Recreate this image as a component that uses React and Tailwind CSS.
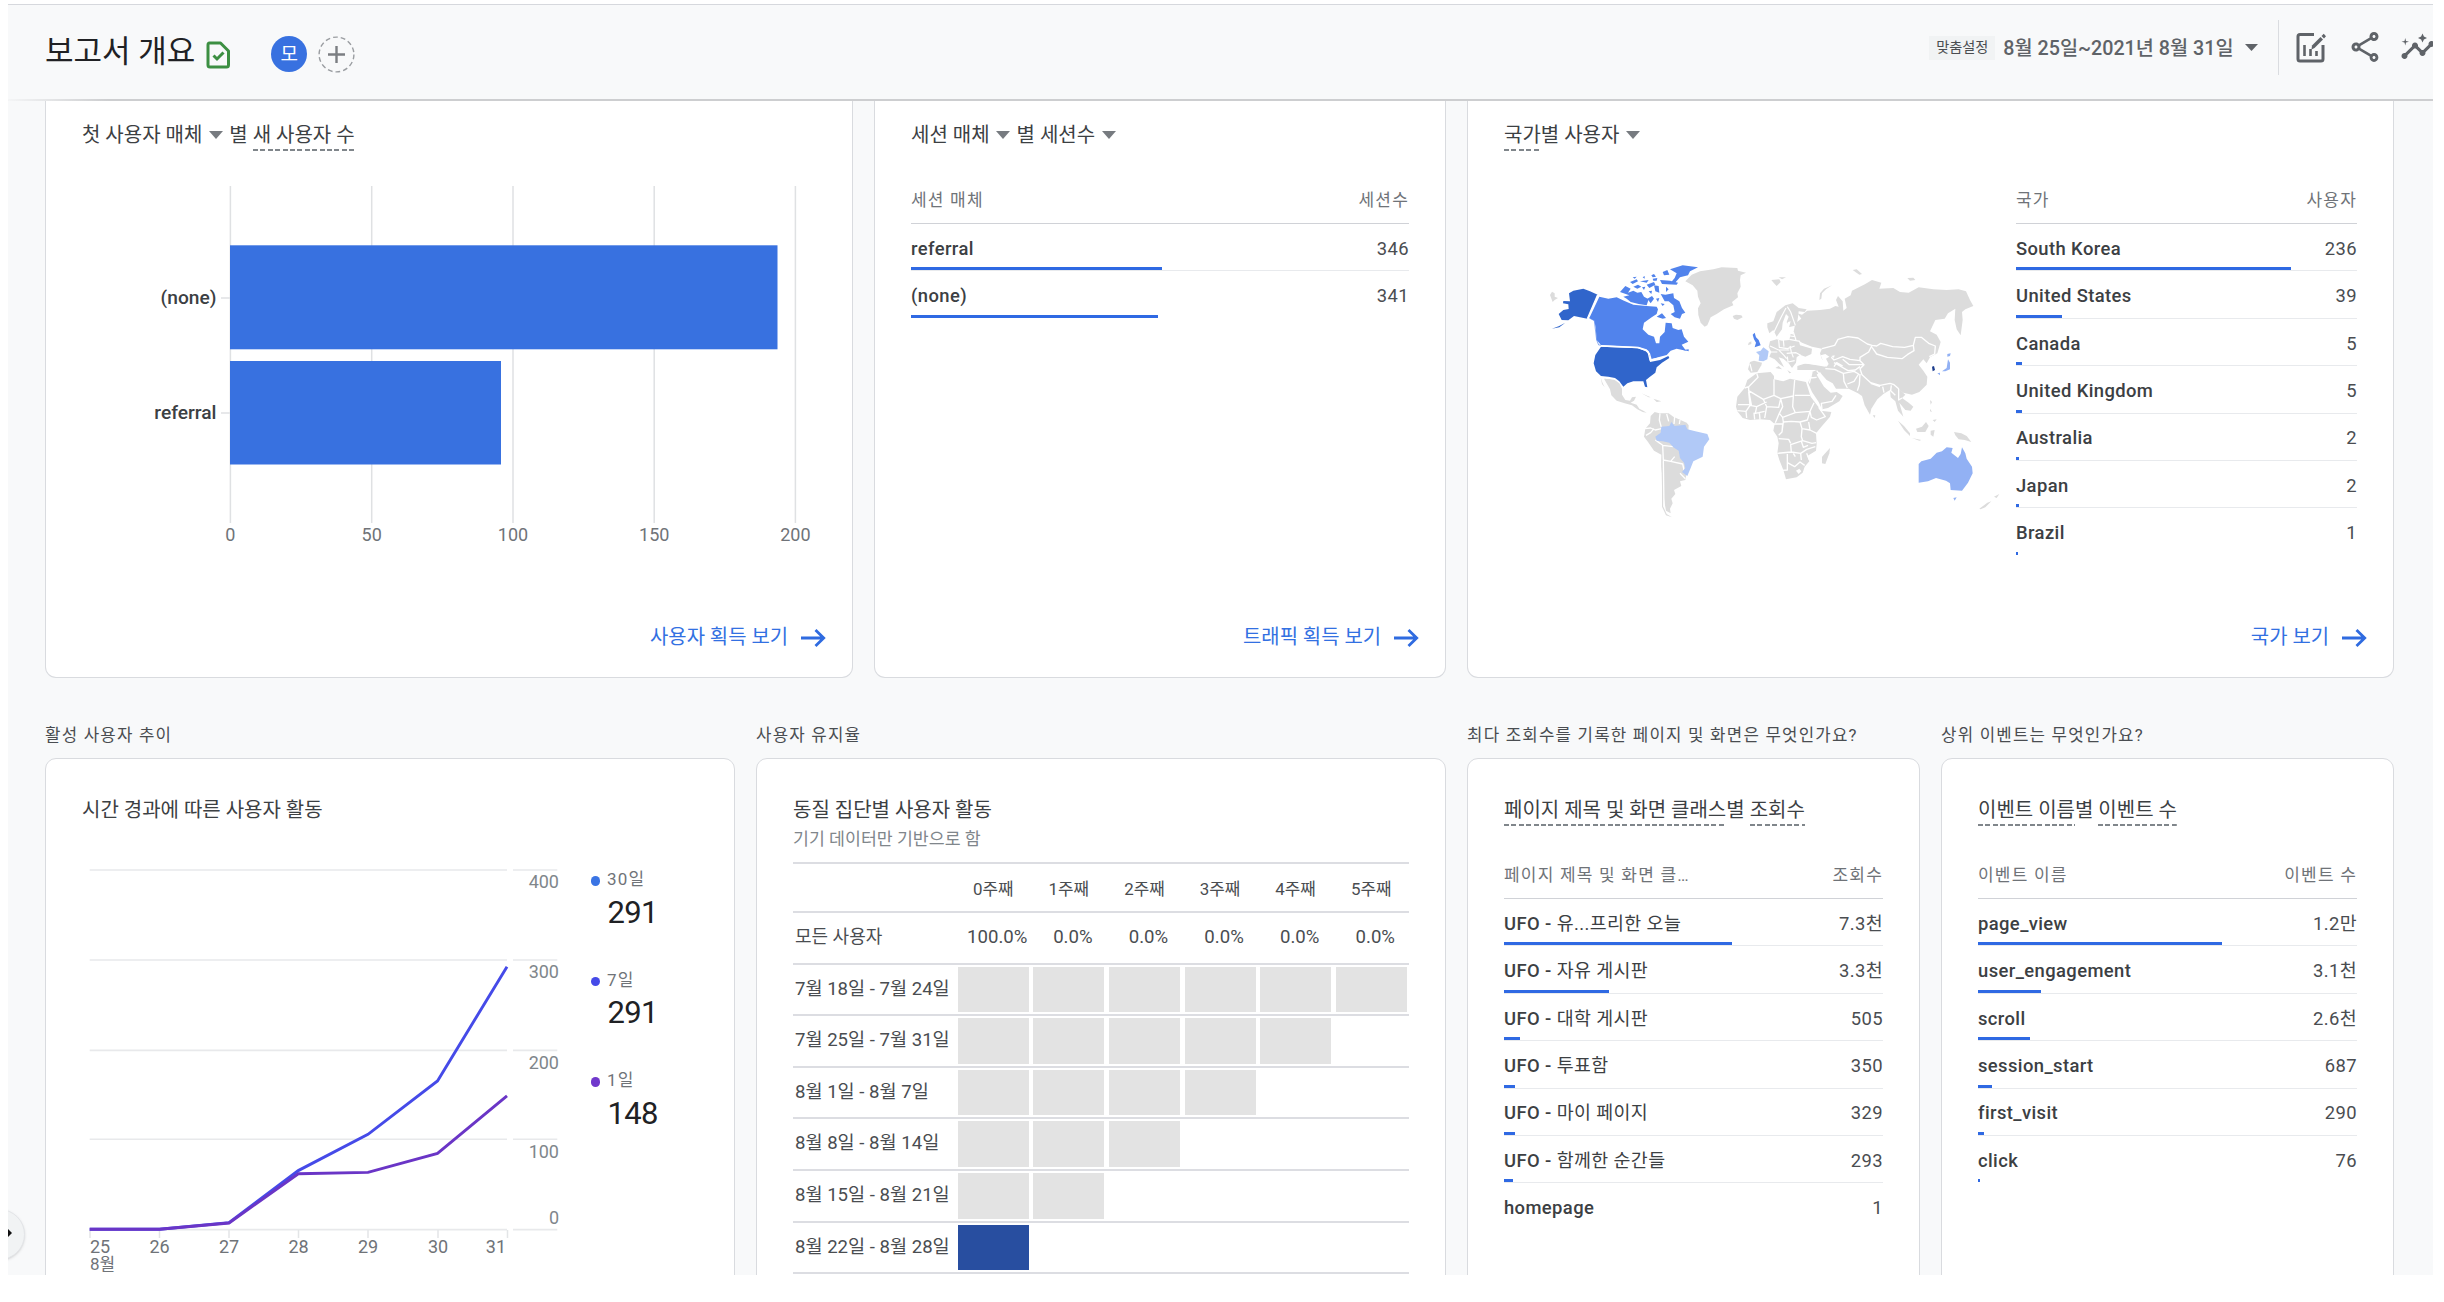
import React from "react";
import { MdInsights, MdOutlineShare } from "react-icons/md";

const Caret = ({ className = "" }) => (
  <svg className={"shrink-0 " + className} width="14" height="8" viewBox="0 0 14 8">
    <path d="M0 0H14L7 8Z" fill="#777b80" />
  </svg>
);

const Dotted = ({ children, className = "" }) => (
  <span
    className={
      "inline-flex h-[31px] items-center whitespace-pre bg-[repeating-linear-gradient(90deg,#80868b_0_5px,transparent_5px_7.4px)] bg-[length:100%_2px] bg-bottom bg-no-repeat " +
      className
    }
  >
    {children}
  </span>
);

const CardTitle = ({ children }) => (
  <div className="flex h-[30px] shrink-0 items-center whitespace-pre pt-[2px] text-[20px] leading-[30px] text-[#3c4043]">
    {children}
  </div>
);

const CardLink = ({ children }) => (
  <div className="mt-auto mr-[-10px] flex h-[30px] items-center justify-end gap-[13px] text-[19.9px] text-[#3270e2]">
    <span className="whitespace-pre">{children}</span>
    <svg width="25" height="18" viewBox="0 0 25 18" fill="none" stroke="#2f6be0" strokeWidth="2.8">
      <path d="M0 9H22.5M14.5 1L22.7 9L14.5 17" />
    </svg>
  </div>
);

const PREFIX = "UFO - ";

const RowName = ({ name }) =>
  name.startsWith(PREFIX) ? (
    <span className="whitespace-pre">
      <span className="font-medium">{PREFIX}</span>
      {name.slice(PREFIX.length)}
    </span>
  ) : (
    <span className="font-medium">{name}</span>
  );

const DataTable = ({ head, rows, className = "" }) => (
  <div className={"mt-[29px] " + className}>
    <div className="flex h-[46px] items-center justify-between border-b-[1.5px] border-[#d0d2d7] pt-px text-[17px] tracking-[1.2px] text-[#6f7378]">
      <span>{head[0]}</span>
      <span>{head[1]}</span>
    </div>
    {rows.map(([name, value, bar], i) => (
      <div
        key={name}
        className={
          "relative flex h-[47.4px] items-center justify-between border-b pt-[3px] text-[18.4px] tracking-[0.4px] text-[#3c4043] " +
          (i === rows.length - 1 ? "border-transparent" : "border-[#e8eaed]")
        }
      >
        <RowName name={name} />
        <span className="text-[#4a4d51]">{value}</span>
        <span className="absolute bottom-0 left-0 h-[3px] bg-[#2f69e3]" style={{ width: bar }} />
      </div>
    ))}
  </div>
);

const Card = ({ top, className = "", children }) => (
  <section
    className={
      "flex shrink-0 flex-col border-[1.5px] border-[#d9dbdf] bg-white px-[36px] " +
      (top ? "h-[579px] rounded-b-[11px] border-t-0 pt-5 pb-[24px] " : "h-[560px] rounded-[11px] pt-[35px] ") +
      className
    }
  >
    {children}
  </section>
);

const Section = ({ label, className, children }) => (
  <div className={"shrink-0 " + className}>
    <div className="mb-2 h-[30px] whitespace-nowrap text-[16.8px] leading-[30px] tracking-[1.2px] text-[#4a4d51]">{label}</div>
    <Card>{children}</Card>
  </div>
);

const BAR_TICKS = [
  [230.4, "0"],
  [371.7, "50"],
  [513, "100"],
  [654.2, "150"],
  [795.4, "200"],
];

const BarChart = () => (
  <svg className="mt-[21px] shrink-0" width="740" height="390" viewBox="82 170 740 390">
    {BAR_TICKS.map(([x, t]) => (
      <g key={t}>
        <path d={`M${x} 186V523`} stroke="#dfe1e3" strokeWidth="1.5" />
        <text x={x} y="541" textAnchor="middle" fontSize="18" fill="#6f7378">{t}</text>
      </g>
    ))}
    <rect x="230" y="245.3" width="547.5" height="104" fill="#3871e0" />
    <rect x="230" y="361" width="271" height="103.5" fill="#3871e0" />
    <path d="M221 298H230M221 413H230" stroke="#dfe1e3" strokeWidth="1.5" />
    <g fontSize="19.2" fontWeight="500" fill="#3c4043" textAnchor="end">
      <text x="216.500" y="303.5">(none)</text>
      <text x="216.500" y="419">referral</text>
    </g>
  </svg>
);

const DAYS = [
  [90, "25", "start"],
  [159.5, "26", "middle"],
  [229, "27", "middle"],
  [298.5, "28", "middle"],
  [368, "29", "middle"],
  [438, "30", "middle"],
  [506, "31", "end"],
];
const LEVELS = [
  [870, "400", 888],
  [960, "300", 978.3],
  [1050.4, "200", 1068.8],
  [1139.2, "100", 1157.8],
  [1229.6, "0", 1224],
];

const LineChart = () => (
  <svg className="mt-[-1px] shrink-0" width="490" height="430" viewBox="82 850 490 430">
    {LEVELS.map(([y, t, ty]) => (
      <g key={t}>
        <path d={`M89.7 ${y}H507M513 ${y}H557.3`} stroke="#e8e9eb" strokeWidth="1.6" />
        <text x="559" y={ty} textAnchor="end" fontSize="18" fill="#80868b">{t}</text>
      </g>
    ))}
    <path d="M90 1230v8M159.5 1230v8M229 1230v8M298.5 1230v8M368 1230v8M438 1230v8M507.5 1230v8" stroke="#e3e5e7" strokeWidth="1.5" />
    <path d="M89.7 1229.2H159.5L229 1222.6L298.3 1170.6L368 1134.3L437.5 1081L507 966.7" fill="none" stroke="#454ae8" strokeWidth="2.9" />
    <path d="M89.7 1229.2H159.5L229 1223L298.3 1173.8L368 1172.4L437.5 1153.4L507 1095.8" fill="none" stroke="#6a35c6" strokeWidth="2.9" />
    <g fontSize="18" fill="#6f7378">
      {DAYS.map(([x, t, anchor]) => (
        <text key={t} x={x} y="1253" textAnchor={anchor}>{t}</text>
      ))}
      <text x="90" y="1270" fontSize="17">8월</text>
    </g>
  </svg>
);

const LEGEND = [
  ["30일", "291", "bg-[#3a74e4]"],
  ["7일", "291", "bg-[#454ae8]"],
  ["1일", "148", "bg-[#7038cc]"],
];

const Legend = () => (
  <div className="ml-[18.500px] pt-[14px]">
    {LEGEND.map(([label, value, dot]) => (
      <div key={label} className="h-[100.6px]">
        <div className="flex h-[30px] items-center gap-[7px] text-[17px] tracking-[1.2px] text-[#6f7378]">
          <span className={"mt-[2px] h-[9.5px] w-[9.5px] rounded-full " + dot} />
          {label}
        </div>
        <div className="ml-[17px] flex h-[36px] items-center text-[31px] tracking-[-0.7px] text-[#202124]">{value}</div>
      </div>
    ))}
  </div>
);

const COHORTS = [
  ["7월 18일 - 7월 24일", 6],
  ["7월 25일 - 7월 31일", 5],
  ["8월 1일 - 8월 7일", 4],
  ["8월 8일 - 8월 14일", 3],
  ["8월 15일 - 8월 21일", 2],
  ["8월 22일 - 8월 28일", 1],
];

const CohortTable = () => (
  <div className="mt-[8px] w-[616px] text-[#4a4d51]">
    <div className="flex h-[48.7px] items-center border-t-2 border-[#dcdde2] pt-[4px] pl-[162.5px] text-[16.9px]">
      {[0, 1, 2, 3, 4, 5].map((n) => (
        <span key={n} className="w-[75.6px] text-center">{n}주째</span>
      ))}
    </div>
    <div className="flex h-[52px] items-center border-t-2 border-[#dcdde2] text-[18.6px]">
      <span className="w-[162.5px] pb-[2px] pl-[2px] text-[18px]">모든 사용자</span>
      {["100.0%", "0.0%", "0.0%", "0.0%", "0.0%", "0.0%"].map((v, i) => (
        <span key={i} className="w-[75.6px] pl-[8px] text-center">{v}</span>
      ))}
    </div>
    {COHORTS.map(([range, n], r) => (
      <div key={range} className="flex h-[51.6px] border-t-2 border-[#dcdde2]">
        <span className="flex w-[162.5px] items-center whitespace-nowrap pl-[2px] text-[18.6px]">{range}</span>
        {Array.from({ length: n }, (_, i) => (
          <span key={i} className="w-[75.6px] px-[2.3px] pt-[2px] pb-[2px]">
            <span className={"block h-full " + (r === 5 ? "bg-[#284ea0]" : "bg-[#e3e3e3]")} />
          </span>
        ))}
      </div>
    ))}
    <div className="border-t-2 border-[#dcdde2]" />
  </div>
);

const WorldMap = () => (
  <svg className="mt-[91px] shrink-0" width="512" height="300" viewBox="12 0 1536 900" strokeLinejoin="round">
    <g fill="#dcdcdc">
      {/* Greenland, Iceland, Svalbard */}
      <path d="M556,124L575,104L600,94L640,88L665,82L712,84L714,92L738,98L722,106L720,120L722,140L712,160L714,172L696,186L700,196L672,208L650,222L632,232L622,256L614,260L602,248L595,225L594,205L602,190L594,170L592,152L578,136Z" />
      <path d="M698,228L708,224L724,226L728,232L712,240L702,236Z" />
      <path d="M814,120L838,118L842,126L830,138L822,130ZM836,112L858,112L846,118Z" />
      <path d="M1058,90L1070,88L1086,102L1078,104ZM1222,114L1240,113L1246,120L1230,122Z" />
      <path d="M958,180L960,160L972,146L996,136L978,148L966,160L964,176Z" />
      <path d="M150,165L156,155L164,160L164,170L174,174L164,180L158,186Z" />
      {/* Mexico and Central America */}
      <path d="M312,416L326,416L344,420L358,430L366,446L366,464L376,480L390,482L396,472L408,470L402,482L392,488L410,494L418,506L430,512L440,518L428,516L412,508L396,496L374,490L350,482L334,466L330,448Z" />
      <path d="M302,412L308,430L314,442L306,432Z" />
      <path d="M424,460L452,472L446,472ZM460,476L484,484L470,486Z" />
      {/* South America */}
      <path d="M452,528L464,516L478,520L506,520L520,530L560,548L566,556L560,700L556,720L540,724L544,738L522,750L526,762L514,776L518,790L510,806L512,820L498,812L494,790L490,760L488,720L484,680L484,644L462,632L444,606L432,590L436,566L450,550Z" />
      <path d="M484,650L490,690L492,750L490,800L500,822L516,832L498,826L486,800L486,740Z" />
      {/* Africa */}
      <path d="M770,400L812,396L822,408L822,418L850,424L870,416L918,426L932,470L956,502L962,512L994,516L990,530L966,558L948,580L950,612L948,632L922,648L928,664L914,680L908,698L890,712L858,718L850,690L838,660L832,640L836,610L832,590L820,572L824,552L810,540L780,538L750,540L728,534L712,514L708,500L712,470L734,444L742,420Z" />
      <path d="M990,624L988,640L976,672L966,670L966,650Z" />
      {/* Europe */}
      <path d="M750,366L762,362L786,368L784,376L772,396L752,398L744,388Z" />
      <path d="M802,262L802,250L820,244L830,216L856,196L878,190L896,204L920,208L914,216L896,214L894,232L890,256L866,262L860,246L866,230L858,222L848,248L846,268L830,290L820,270L808,280Z" />
      <path d="M810,304L830,298L846,302L868,300L872,282L884,284L896,300L900,316L936,326L934,342L916,350L900,344L890,352L888,368L876,384L866,370L850,356L836,352L846,370L852,382L838,372L824,358L808,350L814,336L806,320Z" />
      <path d="M746,308L754,304L754,312L744,316ZM862,390L874,398L868,400ZM846,388L826,384L836,378Z" />
      {/* Russia and Asia */}
      <path d="M880,280L886,250L904,236L892,220L906,224L922,212L960,210L990,206L1006,198L1016,200L1008,180L1014,168L1028,184L1030,212L1040,204L1034,176L1052,166L1056,152L1096,132L1116,120L1144,128L1138,146L1180,144L1200,156L1226,158L1256,142L1300,148L1340,150L1376,148L1398,154L1410,180L1420,198L1396,208L1386,216L1388,240L1382,286L1370,268L1364,240L1366,206L1344,220L1334,236L1306,240L1290,274L1310,284L1322,306L1312,340L1290,352L1280,370L1270,358L1256,374L1270,392L1282,410L1280,434L1258,456L1236,464L1210,458L1196,446L1216,464L1206,474L1226,488L1240,500L1232,512L1216,510L1198,488L1210,530L1194,512L1186,484L1172,472L1170,450L1150,462L1132,478L1114,506L1110,524L1094,496L1086,468L1074,460L1046,446L1008,446L998,430L980,420L966,404L960,396L950,404L972,440L992,458L1010,456L1028,468L1018,484L984,504L966,508L956,486L936,456L924,428L932,412L936,396L950,390L892,390L892,378L918,370L950,376L976,380L984,372L966,358L960,340L966,326L936,320L906,308L888,296Z" />
      <path d="M1194,542L1212,558L1230,580L1230,588L1212,570ZM1248,566L1266,560L1278,546L1286,558L1276,576L1252,576ZM1292,572L1304,570L1300,590L1292,584Z" />
      <path d="M1236,594L1264,600L1258,602ZM1362,576L1384,580L1400,588L1414,606L1394,600L1376,598L1366,586ZM1290,506L1296,516L1290,514ZM1298,540L1310,538L1304,546ZM1290,480L1296,486L1292,494ZM1118,526L1126,526L1124,534Z" />
      <path d="M1438,806L1462,788L1474,784L1456,802L1442,808ZM1482,770L1498,762L1490,774Z" />
    </g>
    {/* Inland seas */}
    <g fill="#fff">
      <path d="M962,346L976,342L988,350L978,356L986,372L980,380L970,372L968,360ZM900,350L930,352L956,368L946,374L904,370L890,368ZM994,348L1004,346L1002,354ZM888,692L898,686L904,694L896,702Z" />
      <path d="M864,246L872,244L864,274L860,300L850,298L852,270ZM816,272L826,290L816,296Z" />
    </g>
    {/* Borders */}
    <g fill="none" stroke="#fff" strokeWidth="4">
      <path d="M318,414L340,416M480,520L478,540L484,562M500,522L506,544M524,530L522,552M540,540L538,552M434,566L452,564L466,570L484,566M438,586L452,578L462,566M466,600L480,610L488,616L490,660L512,664L548,672L552,690M488,616L520,620M490,662L492,800M512,664L524,650M540,700L556,716" />
      <path d="M770,400L774,412L746,440L734,444M746,440L746,452L790,478L822,466L822,418M746,452L754,494L714,494M746,456L750,496L770,500L800,486M790,478L800,500L836,502L842,476L822,466M842,476L880,468L884,420M884,466L930,466M842,476L848,500L838,520M880,468L878,500L886,518L930,514L942,488M800,500L794,534M770,500L766,520L794,514M750,496L738,514L712,512M738,514L740,534M762,518L764,538M778,516L780,538M838,520L826,548M838,520L848,532L886,518M848,532L850,546L874,544L900,546L922,540L930,514M820,552L848,552L846,576L836,586M850,546L846,576M836,596L866,598L872,610M900,546L906,566L904,590L908,602L872,614L874,636L832,640M930,514L934,532L950,540L976,530L956,502M906,566L930,570L950,580M926,546L930,570M908,602L936,610L948,608M904,604L910,622L924,616M874,636L902,640L920,628L946,620M862,642L862,690L838,692M862,668L884,680L900,666L914,676M902,640L904,660M880,640L886,650M920,640L928,660" />
      <path d="M822,276L844,230L858,204M862,200L872,216L886,256M836,300L838,322L862,326L884,318M810,318L836,330L868,330M850,300L852,320M868,298L900,304M860,340L888,338L902,346M838,332L852,346L860,356M870,318L874,336L880,352M812,336L832,336M750,372L756,394M862,350L864,366L884,362M870,288L886,290M880,276L888,300" strokeWidth="3.5" />
      <path d="M966,326L1004,316L1014,298L1044,290L1074,294L1102,312L1116,316L1106,336L1080,352L1080,362L1050,358L1028,350L1002,360L994,352M1116,316L1130,318L1142,310L1178,320L1214,322L1240,316L1246,292L1264,292L1286,310L1306,318L1304,342L1288,350M1116,322L1130,342L1162,352L1206,356L1222,344L1242,332L1240,316M1080,362L1092,374L1080,386L1086,404L1112,428L1140,436L1170,430L1182,434L1196,446M1092,374L1048,374L1028,358M1002,368L1020,378L1044,392L1066,390L1080,380M976,386L1004,388L1030,400L1032,424L1042,444M1030,400L1062,394L1076,402L1062,424L1042,432M1080,402L1078,434L1072,452M1112,430L1140,440M1148,440L1152,458M1174,436L1172,452L1186,466M1196,446L1196,480L1206,474M950,392L966,412L978,424M930,414L950,412M936,396L928,430M966,508L964,490L996,484L1008,466M1002,380L1010,368L1028,378" />
    </g>
    {/* Tracked countries */}
    <g fill="#3065cb">
      <path d="M293,164L262,236L240,232L222,228L205,241L185,240L176,222L190,210L206,207L205,193L189,190L190,183L210,184L207,160L220,152L250,146L270,154Z" />
      <path d="M156,266L176,259L196,248L178,262Z" />
      <path d="M303,320L412,325L436,332L448,345L450,366L480,360L505,348L508,354L486,368L470,382L466,398L448,412L438,420L442,442L435,440L430,424L400,424L382,430L370,440L358,424L345,414L325,410L303,408L288,394L281,370L286,345Z" />
    </g>
    <g fill="#5183ec">
      <path d="M298,170L325,176L350,172L372,182L400,194L440,198L470,200L474,208L470,222L455,232L432,248L428,268L445,284L462,290L468,310L478,310L480,290L494,276L497,248L515,250L518,264L535,270L545,268L552,290L565,305L545,314L558,332L530,326L512,332L500,345L480,350L455,358L450,340L440,328L415,320L303,315L290,300L287,262L283,242L268,234Z" />
      <path d="M360,156L376,138L392,146L384,158L400,152L412,158L424,156L432,170L446,178L440,196L416,192L392,186L380,176L370,170L388,166Z" />
      <path d="M510,88L548,76L594,82L570,94L564,106L540,112L524,130L514,126L524,114L530,100ZM488,96L502,90L508,104L492,106ZM480,120L510,122L534,128L530,134L486,132Z" />
      <path d="M390,126L410,118L414,124L398,132ZM420,124L446,120L440,128ZM440,134L462,126L466,134L448,144ZM462,136L476,138L478,158L466,154ZM428,112L434,108L434,116ZM442,176L456,168L462,176L452,190Z" />
      <path d="M400,140L414,134L424,140L412,146ZM426,142L436,140L432,150ZM454,106L462,102L468,110L458,112ZM458,116L472,114L470,122L460,122ZM446,154L456,152L454,162ZM468,176L478,174L474,186ZM398,112L410,110L404,116Z" />
      <path d="M482,162L496,164L520,160L522,174L538,184L546,204L556,218L546,222L540,236L524,232L512,222L524,216L520,196L506,184L494,184ZM498,140L506,148L498,156ZM482,190L494,192L488,198ZM470,230L486,220L498,234L488,236ZM550,330L566,328L566,334Z" />
      <path d="M758,284L764,278L768,292L776,300L782,316L764,322L768,308L762,298Z" />
    </g>
    <path d="M268,234L283,242L290,300L296,315L303,315" fill="none" stroke="#5183ec" strokeWidth="2" />
    <g fill="#b1c9f7">
      <path d="M466,590L482,578L484,560L508,558L514,546L524,558L556,554L562,568L586,574L622,582L628,598L612,620L608,650L580,664L572,684L562,708L546,696L556,684L552,668L540,654L536,632L520,622L508,608L488,604L470,602Z" />
      <path d="M768,336L782,332L790,322L806,334L802,358L790,364L776,362L778,346Z" />
    </g>
    <g fill="#92b1f4">
      <path d="M1256,672L1264,664L1292,656L1310,638L1326,634L1340,622L1358,624L1354,638L1374,654L1382,642L1386,622L1396,640L1400,656L1416,680L1418,700L1404,728L1386,752L1352,750L1350,730L1338,722L1308,714L1284,724L1256,728ZM1360,774L1370,772L1364,782Z" />
      <path d="M1342,342L1352,340L1350,348L1342,350ZM1344,358L1350,368L1350,388L1336,394L1326,394L1340,384ZM1312,400L1320,398L1320,406Z" />
    </g>
    <path d="M1296,380L1302,378L1305,390L1298,394Z" fill="#1c3c8c" />
    <path d="M293,164L262,236M303,318L415,323L444,334L450,360L480,354" fill="none" stroke="#fff" strokeWidth="4" />
  </svg>
);

const CustomizeIcon = () => (
  <svg width="32" height="34" viewBox="0 0 32 34" fill="none" stroke="#5f6368" strokeWidth="3">
    <path d="M19 4.5H5Q3 4.5 3 6.500V29Q3 31 5 31H26Q28 31 28 29V15" />
    <path d="M9.500 15V26M15.500 19V26M21.500 21V26" strokeWidth="2.600" />
    <path d="M16.500 19.500L17 15.500L25.500 7L28 9.500L19.500 18Z" fill="#5f6368" stroke="none" />
    <path d="M26.500 6L28.700 3.800L31 6.200L29 8.400Z" fill="#5f6368" stroke="none" />
  </svg>
);

const Header = () => (
  <header className="flex h-[95px] shrink-0 items-start border-t-[1.5px] border-[#d6d8dd] bg-[#f8f9fa] pl-[37px]">
    <h1 className="mt-[24px] whitespace-pre text-[31px] leading-[46px] text-[#202124]">보고서 개요</h1>
    <svg className="mt-[35.500px] ml-[11px]" width="25" height="28" viewBox="0 0 25 28" fill="none" stroke="#3c8f42" strokeWidth="3">
      <path d="M3.500 2H14.500L22.500 10V24Q22.500 26 20.500 26H4Q2 26 2 24V4Q2 2 3.500 2Z" strokeLinejoin="round" />
      <path d="M7.500 14.500L11 18L17.500 11.500" />
    </svg>
    <span className="mt-[31px] ml-[40px] flex h-[36px] w-[36px] items-center justify-center rounded-full bg-[#3871e0] text-[19px] leading-none text-white">
      모
    </span>
    <svg className="mt-[30.500px] ml-[11px]" width="37" height="37" viewBox="0 0 37 37" fill="none">
      <circle cx="18.500" cy="18.500" r="17.400" stroke="#9a9da1" strokeWidth="1.400" strokeDasharray="4.800 3" />
      <path d="M18.500 10V27M10 18.500H27" stroke="#7b7e82" strokeWidth="2.400" />
    </svg>
    <div className="mt-[15px] ml-auto flex h-[55px] items-center">
      <span className="mt-px flex h-[24px] w-[66px] items-center justify-center bg-[#f1f3f4] text-[14.200px] text-[#4a4d51]">맞춤설정</span>
      <span className="ml-[8px] whitespace-pre pt-[2px] text-[19.700px] font-medium text-[#5f6368]">8월 25일~2021년 8월 31일</span>
      <svg className="ml-[11px]" width="13" height="7" viewBox="0 0 13 7">
        <path d="M0 0H13L6.500 7Z" fill="#5f6368" />
      </svg>
      <span className="ml-[20px] h-[55px] w-[1.500px] bg-[#dadce0]" />
    </div>
    <div className="mt-[24px] flex h-[36px] w-[154px] items-center overflow-hidden text-[#5f6368]">
      <span className="ml-[16px] shrink-0"><CustomizeIcon /></span>
      <MdOutlineShare className="ml-[19.500px] h-[36px] w-[36px] shrink-0" />
      <MdInsights className="ml-[17px] h-[36px] w-[36px] shrink-0" />
    </div>
  </header>
);

export default function App() {
  return (
    <div className="h-[1302px] w-[2444px] overflow-hidden bg-white pt-1 pl-2 font-['Roboto','Noto_Sans_CJK_KR',sans-serif]">
      <div className="relative flex h-[1271px] w-[2425px] flex-col overflow-hidden bg-[#f8f9fa]">
        <Header />
        <div className="z-10 h-[2px] w-full shrink-0 bg-[linear-gradient(90deg,#f4f5f6_0,#cdced0_100px)]" />
        <main className="mt-[-2px] pl-[37px]">
          <div className="flex gap-[21px]">
            <Card top className="w-[808px]">
              <CardTitle>
                첫 사용자 매체<Caret className="mx-[6.500px]" />별 <Dotted>새 사용자 수</Dotted>
              </CardTitle>
              <BarChart />
              <CardLink>사용자 획득 보기</CardLink>
            </Card>
            <Card top className="w-[572px]">
              <CardTitle>
                세션 매체<Caret className="mx-[6.500px]" />별 세션수<Caret className="mx-[6.500px]" />
              </CardTitle>
              <DataTable head={["세션 매체", "세션수"]} rows={[["referral", "346", 250.7], ["(none)", "341", 247]]} />
              <CardLink>트래픽 획득 보기</CardLink>
            </Card>
            <Card top className="w-[927px]">
              <CardTitle>
                <Dotted>국가</Dotted>별 사용자<Caret className="mx-[7px]" />
              </CardTitle>
              <div className="flex">
                <WorldMap />
                <DataTable
                  className="w-[341px]"
                  head={["국가", "사용자"]}
                  rows={[
                    ["South Korea", "236", 275],
                    ["United States", "39", 45.7],
                    ["Canada", "5", 6],
                    ["United Kingdom", "5", 6],
                    ["Australia", "2", 2.5],
                    ["Japan", "2", 2.5],
                    ["Brazil", "1", 1.5],
                  ]}
                />
              </div>
              <CardLink>국가 보기</CardLink>
            </Card>
          </div>
          <div className="mt-[42px] flex">
            <Section label="활성 사용자 추이" className="w-[690px]">
              <CardTitle>시간 경과에 따른 사용자 활동</CardTitle>
              <div className="mt-[27px] flex">
                <LineChart />
                <Legend />
              </div>
            </Section>
            <Section label="사용자 유지율" className="ml-[21px] w-[690px]">
              <CardTitle>동질 집단별 사용자 활동</CardTitle>
              <p className="h-[30px] text-[17.300px] leading-[30px] text-[#80868b]">기기 데이터만 기반으로 함</p>
              <CohortTable />
            </Section>
            <Section label="최다 조회수를 기록한 페이지 및 화면은 무엇인가요?" className="ml-[21px] w-[453px]">
              <CardTitle>
                <Dotted>페이지 제목 및 화면 클래스</Dotted>별 <Dotted>조회수</Dotted>
              </CardTitle>
              <DataTable
                head={["페이지 제목 및 화면 클…", "조회수"]}
                rows={[
                  ["UFO - 유...프리한 오늘", "7.3천", 228],
                  ["UFO - 자유 게시판", "3.3천", 105],
                  ["UFO - 대학 게시판", "505", 16],
                  ["UFO - 투표함", "350", 11],
                  ["UFO - 마이 페이지", "329", 10.5],
                  ["UFO - 함께한 순간들", "293", 9],
                  ["homepage", "1", 0],
                ]}
              />
            </Section>
            <Section label="상위 이벤트는 무엇인가요?" className="ml-[21px] w-[453px]">
              <CardTitle>
                <Dotted>이벤트 이름</Dotted>별 <Dotted>이벤트 수</Dotted>
              </CardTitle>
              <DataTable
                head={["이벤트 이름", "이벤트 수"]}
                rows={[
                  ["page_view", "1.2만", 243.6],
                  ["user_engagement", "3.1천", 62.5],
                  ["scroll", "2.6천", 51.5],
                  ["session_start", "687", 13.5],
                  ["first_visit", "290", 6],
                  ["click", "76", 1.5],
                ]}
              />
            </Section>
          </div>
        </main>
        <div className="absolute top-[1205px] left-[-34px] flex h-[51px] w-[51px] items-center justify-end rounded-full border border-[#e3e5e8] bg-[#f1f3f4] shadow-sm">
          <svg className="mr-[12px] mb-[3px]" width="8" height="8" viewBox="0 0 8 8">
            <path d="M0 2.500H4V0L8 4L4 8V5.500H0Z" fill="#111" />
          </svg>
        </div>
      </div>
    </div>
  );
}
